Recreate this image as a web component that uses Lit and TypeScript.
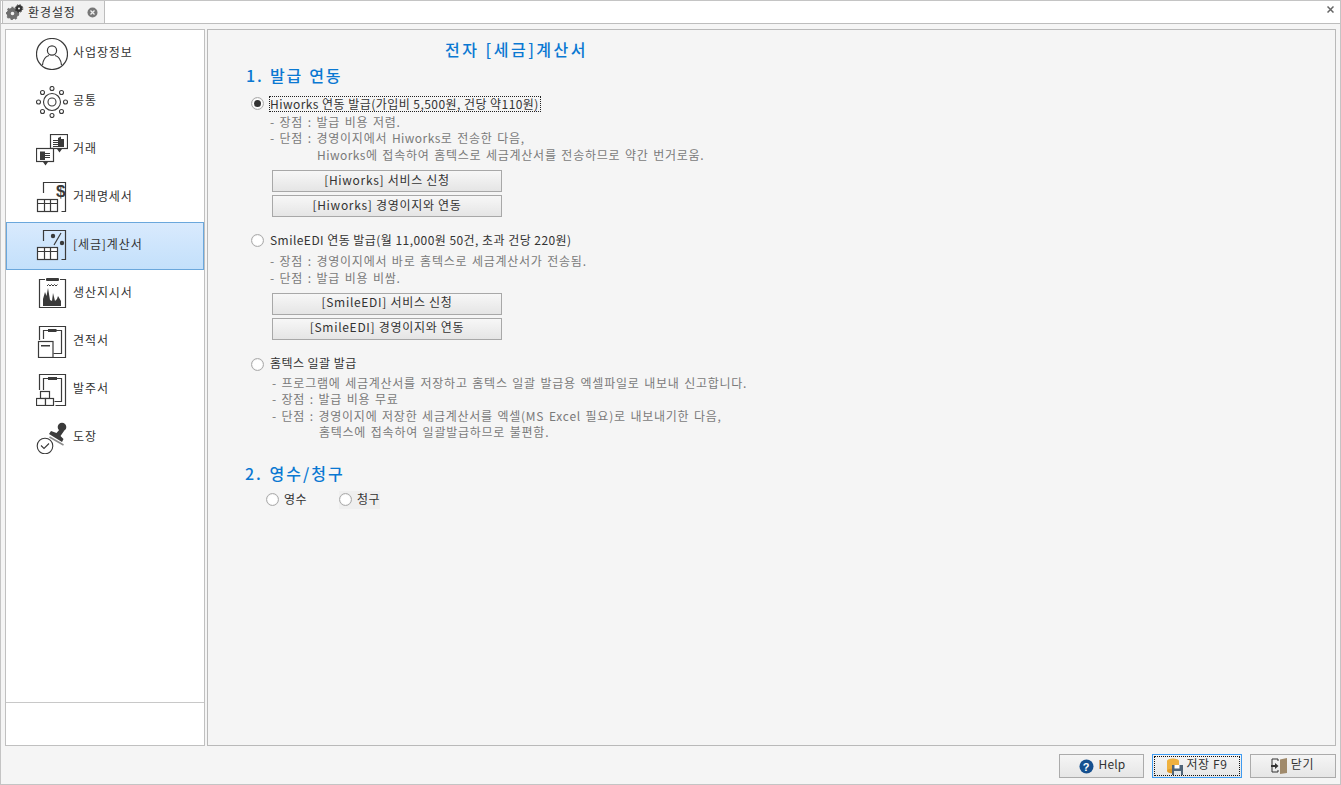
import { LitElement, html, css, svg } from "lit";
import { customElement } from "lit/decorators.js";

const ink = "#3a3a3a";
const table = svg`<g fill="#fff" stroke="${ink}" stroke-width="1.200"><rect x="1.500" y="17.500" width="20" height="12"/><path d="M1.500 21.500h20M8.500 17.500v12M14.500 17.500v12"/></g>`;
const icons: Record<string, any> = {
  user: svg`<circle cx="16" cy="16" r="15.500" fill="none" stroke="${ink}" stroke-width="1.200"/><circle cx="16" cy="12.500" r="4.600" fill="none" stroke="${ink}" stroke-width="1.200"/><path d="M6.500 27c.6-6 4-8.800 6.500-9.500M25.500 27c-.6-6-4-8.800-6.500-9.500" fill="none" stroke="${ink}" stroke-width="1.200"/>`,
  gear: svg`<g fill="none" stroke="${ink}" stroke-width="1.100"><circle cx="16" cy="16" r="8.500"/><circle cx="16" cy="16" r="4"/><circle cx="16" cy="2.500" r="2"/><circle cx="16" cy="29.500" r="2"/><circle cx="2.500" cy="16" r="2"/><circle cx="29.500" cy="16" r="2"/><circle cx="6.500" cy="6.500" r="2"/><circle cx="25.500" cy="6.500" r="2"/><circle cx="6.500" cy="25.500" r="2"/><circle cx="25.500" cy="25.500" r="2"/></g>`,
  trade: svg`<g stroke="${ink}" fill="#fff" stroke-width="1.200"><rect x="14.500" y="0.500" width="17" height="14"/><rect x="0.500" y="14.500" width="17" height="13"/></g><path d="M22 4l3-1.500V5h3v8h-6zM4 17.500h5V26H4z" fill="${ink}"/><path d="M17 6h5v1h-5zM17 8h5v1h-5zM17 10h5v1h-5zM17 12h5v1h-5zM9 19h5v1H9zM9 21h5v1H9zM9 23h5v1H9z" fill="${ink}"/><path d="M21 15h5l-2.500 3.500zM7 28h5l-2.500 3.500z" fill="${ink}"/>`,
  bill: svg`<path d="M7.500 11V.5h22v29h-4" fill="none" stroke="${ink}" stroke-width="1.200"/><text x="20" y="15" font-family="Liberation Sans" font-size="17" font-weight="700" fill="${ink}">$</text>${table}`,
  tax: svg`<path d="M7.500 11V.5h22v29h-4" fill="none" stroke="${ink}" stroke-width="1.200"/><circle cx="17" cy="6" r="2.200" fill="${ink}"/><circle cx="26" cy="13" r="2.200" fill="${ink}"/><path d="M25 3l-7 12" stroke="${ink}" stroke-width="1.200"/>${table}`,
  prod: svg`<path d="M9 1.500H3.500v28h26v-28H24" fill="none" stroke="${ink}" stroke-width="1.200"/><rect x="10" y="0" width="13" height="3" rx="1" fill="${ink}"/><path d="M7 28V21l2-7 1.500 4 1.500-8 2 12 2 1 1-8 2 8 2-2 1-3 3 5V28z" fill="${ink}"/><path d="M11 8l1.500-1.500 1.500 1.500 1.500-1.500 1.500 1.500 1.500-1.500 1.500 1.500 1.500-1.500" fill="none" stroke="${ink}"/>`,
  quote: svg`<path d="M3.500 14V.5h26v31H17" fill="none" stroke="${ink}" stroke-width="1.200"/><path d="M7.500 13V4.500h18v23h-8" fill="none" stroke="${ink}" stroke-width="1.200"/><rect x="12" y="3" width="8.500" height="3" fill="${ink}"/><rect x="2.500" y="15.500" width="14.500" height="16" fill="#fff" stroke="${ink}" stroke-width="1.200"/><rect x="5" y="19" width="9" height="1.500" fill="${ink}"/>`,
  order: svg`<path d="M3.500 16V.5h26v31h-10" fill="none" stroke="${ink}" stroke-width="1.200"/><path d="M7.500 16V4.500h18v23h-7" fill="none" stroke="${ink}" stroke-width="1.200"/><rect x="12" y="3" width="9" height="3" fill="${ink}"/><g fill="#fff" stroke="${ink}" stroke-width="1.200"><rect x="4.500" y="17.500" width="9" height="7"/><rect x="0.500" y="24.500" width="9" height="7"/><rect x="9.500" y="24.500" width="8" height="7"/></g>`,
  stamp: svg`<circle cx="26" cy="5" r="4.300" fill="${ink}"/><path d="M24 7l4 2-3.500 5 3 3-1.500 3-13-8 2-3 5.500 2z" fill="${ink}"/><path d="M13.500 15l14 8" stroke="#8a8a8a" stroke-width="1.600"/><circle cx="9" cy="24" r="7.800" fill="#fff" stroke="${ink}" stroke-width="1.100"/><path d="M5 23.500l3 3 5-5" fill="none" stroke="${ink}" stroke-width="1.100"/>`,
};

const menu: [string, string][] = [
  ["user", "사업장정보"], ["gear", "공통"], ["trade", "거래"], ["bill", "거래명세서"], ["tax", "[세금]계산서"],
  ["prod", "생산지시서"], ["quote", "견적서"], ["order", "발주서"], ["stamp", "도장"],
];

@customElement("app-root")
export class AppRoot extends LitElement {
  static styles = css`
    :host { display: block; width: 1341px; height: 785px; font-family: "Noto Sans CJK KR", "Liberation Sans", sans-serif; font-size: 12px; color: #333; }
    * { box-sizing: border-box; }
    .win { width: 1341px; height: 785px; background: #f5f5f5; border: 1px solid #c4c4c4; display: flex; flex-direction: column; }
    .tabbar { height: 23px; background: #fff; border-bottom: 1px solid #bdbdbd; display: flex; justify-content: space-between; flex: none; }
    .tab { width: 103px; height: 23px; background: #f1f1f1; border-right: 1px solid #bdbdbd; border-bottom: 1px solid #bdbdbd; border-left: 1px solid #bdbdbd; margin-left: 1px; display: flex; align-items: center; padding-left: 3px; font-size: 12px; line-height: 16px; color: #333; }
    .tab .t { margin-left: 4px; width: 48px; letter-spacing: 0.9px; white-space: nowrap; }
    .tab .c { margin-left: 11px; }
    .x { margin: 5px 6px 0 0; }
    .body { flex: 1; display: flex; padding: 5px 4px 0 4px; gap: 2px; min-height: 0; }
    .side { width: 200px; height: 717px; background: #fff; border: 1px solid #c0c0c0; display: flex; flex-direction: column; flex: none; }
    .items { height: 673px; border-bottom: 1px solid #c8c8c8; }
    .item { height: 48px; display: flex; align-items: center; padding-left: 30px; letter-spacing: 0.9px; line-height: 16px; color: #333; }
    .item span { padding-bottom: 4px; }
    .item.sel { background: linear-gradient(#d9eafd, #c3e0fb); border: 1px solid #6aa7dc; padding-left: 29px; }
    .item svg { flex: none; margin-right: 5px; }
    .main { width: 1129px; height: 717px; border: 1px solid #b9b9b9; background: #f5f5f5; padding-left: 38px; flex: none; }
    .title { margin: 10px 0 0 199px; height: 18px; line-height: 18px; font-size: 16px; font-weight: 500; color: #0a78d2; letter-spacing: 2.500px; white-space: nowrap; }
    .h { height: 18px; line-height: 18px; font-size: 16px; font-weight: 500; color: #0a78d2; letter-spacing: 1.800px; word-spacing: 1px; white-space: nowrap; }
    .h1 { margin-top: 8px; }
    .h2 { margin: 23px 0 0 -1px; letter-spacing: 2px; }
    .radio { display: flex; align-items: center; height: 17px; line-height: 16px; letter-spacing: 0.45px; white-space: nowrap; color: #333; }
    .dot { width: 13px; height: 13px; border-radius: 50%; background: #fff; border: 1px solid #aaa; flex: none; margin-right: 6px; display: flex; align-items: center; justify-content: center; box-shadow: inset 0 0 1px #bbb; }
    .dot i { width: 7px; height: 7px; border-radius: 50%; background: #333; }
    .radio .lab { padding-bottom: 2px; }
    .r0 { margin: 11px 0 0 5px; }
    .r1 { margin: 15px 0 0 5px; }
    .r2 { margin: 16px 0 0 5px; }
    .focus { outline: 1px dotted #222; padding: 0 1px 0 0; line-height: 14px; }
    .desc { margin: 2px 0 0 24px; color: #7a7a7a; line-height: 16.4px; letter-spacing: 0.75px; word-spacing: 1.200px; white-space: nowrap; }
    .desc div { height: 16.4px; }
    .d2 { margin-top: 4px; }
    .desc .l { letter-spacing: 0.45px; }
    .ind { padding-left: 47px; }
    .d3 { margin: 2px 0 0 26px; }
    .btns { margin: 7px 0 0 26px; display: flex; flex-direction: column; gap: 3px; }
    .btn { width: 230px; height: 22px; border: 1px solid #a8a8a8; background: linear-gradient(#f7f7f7, #e5e5e5); display: flex; align-items: center; justify-content: center; color: #333; letter-spacing: 0.7px; line-height: 14px; white-space: nowrap; padding-bottom: 3px; }
    .rr { display: flex; margin: 9px 0 0 20px; align-items: center; }
    .rr .radio { height: 18px; }
    .rr .dot { margin-right: 5px; }
    .rr .a { width: 73px; }
    .rr .b { background: #efefef; }
    .foot { height: 38px; display: flex; justify-content: flex-end; align-items: flex-start; padding: 8px 4px 0 0; flex: none; }
    .fb { height: 24px; border: 1px solid #ababab; background: linear-gradient(#f5f5f5, #e6e6e6); display: flex; align-items: center; justify-content: center; letter-spacing: 0.6px; line-height: 14px; color: #333; white-space: nowrap; gap: 4px; }
    .fb span { padding-bottom: 4px; }
    .fb.help { width: 85px; padding-left: 2px; }
    .fb.help span { letter-spacing: 0.2px; }
    .fb.save { width: 90px; margin-left: 8px; border: 1px solid #3f9bf0; }
    .fb.close { width: 86px; margin-left: 8px; gap: 3px; padding-right: 2px; }
    .inner { width: 86px; height: 20px; border: 1px dotted #111; display: flex; align-items: center; justify-content: center; gap: 2px; }
  `;

  render() {
    return html`<div class="win">
      <div class="tabbar">
        <div class="tab">
          <svg width="18" height="16" viewBox="0 0 18 16"><circle cx="6.500" cy="9.500" r="3.800" fill="none" stroke="#6f6f6f" stroke-width="4"/><circle cx="6.500" cy="9.500" r="6" fill="none" stroke="#6f6f6f" stroke-width="1.500" stroke-dasharray="2.200 2.200"/><circle cx="13" cy="4.500" r="2.200" fill="none" stroke="#333" stroke-width="2.400"/><circle cx="13" cy="4.500" r="3.800" fill="none" stroke="#333" stroke-width="1" stroke-dasharray="1.500 1.500"/></svg>
          <span class="t">환경설정</span>
          <svg class="c" width="11" height="11" viewBox="0 0 11 11"><circle cx="5.500" cy="5.500" r="5" fill="#777"/><path d="M3.500 3.500l4 4M7.500 3.500l-4 4" stroke="#eee" stroke-width="1.300"/></svg>
        </div>
        <svg class="x" width="7" height="7" viewBox="0 0 7 7"><path d="M.5.5l6 6M6.500.5l-6 6" stroke="#666" stroke-width="1.500"/></svg>
      </div>
      <div class="body">
        <div class="side">
          <div class="items">
            ${menu.map(([k, label], i) => html`<div class="item ${i === 4 ? "sel" : ""}"><svg width="32" height="32" viewBox="0 0 32 32">${icons[k]}</svg><span>${label}</span></div>`)}
          </div>
        </div>
        <div class="main">
          <div class="title">전자 [세금]계산서</div>
          <div class="h h1">1. 발급 연동</div>
          <div class="radio r0"><span class="dot"><i></i></span><span class="focus">Hiworks 연동 발급(가입비 5,500원, 건당 약110원)</span></div>
          <div class="desc">
            <div>- 장점 : 발급 비용 저렴.</div>
            <div>- 단점 : 경영이지에서 <span class="l">Hiworks</span>로 전송한 다음,</div>
            <div class="ind"><span class="l">Hiworks</span>에 접속하여 홈텍스로 세금계산서를 전송하므로 약간 번거로움.</div>
          </div>
          <div class="btns"><div class="btn">[Hiworks] 서비스 신청</div><div class="btn">[Hiworks] 경영이지와 연동</div></div>
          <div class="radio r1"><span class="dot"></span><span class="lab">SmileEDI 연동 발급(월 11,000원 50건, 초과 건당 220원)</span></div>
          <div class="desc d2">
            <div>- 장점 : 경영이지에서 바로 홈텍스로 세금계산서가 전송됨.</div>
            <div>- 단점 : 발급 비용 비쌈.</div>
          </div>
          <div class="btns"><div class="btn">[SmileEDI] 서비스 신청</div><div class="btn">[SmileEDI] 경영이지와 연동</div></div>
          <div class="radio r2"><span class="dot"></span><span class="lab">홈텍스 일괄 발급</span></div>
          <div class="desc d3">
            <div>- 프로그램에 세금계산서를 저장하고 홈텍스 일괄 발급용 엑셀파일로 내보내 신고합니다.</div>
            <div>- 장점 : 발급 비용 무료</div>
            <div>- 단점 : 경영이지에 저장한 세금계산서를 엑셀(MS Excel 필요)로 내보내기한 다음,</div>
            <div class="ind">홈텍스에 접속하여 일괄발급하므로 불편함.</div>
          </div>
          <div class="h h2">2. 영수/청구</div>
          <div class="rr">
            <div class="radio a"><span class="dot"></span><span class="lab">영수</span></div>
            <div class="radio b"><span class="dot"></span><span class="lab">청구</span></div>
          </div>
        </div>
      </div>
      <div class="foot">
        <div class="fb help"><svg width="15" height="15" viewBox="0 0 15 15"><circle cx="7.500" cy="7.500" r="7" fill="#16508f"/><text x="7.500" y="11.500" text-anchor="middle" font-family="Liberation Sans" font-weight="700" font-size="11" fill="#fff">?</text></svg><span>Help</span></div>
        <div class="fb save"><div class="inner"><svg width="18" height="17" viewBox="0 0 18 17"><ellipse cx="7" cy="3" rx="6" ry="2.500" fill="#efb13f"/><rect x="1" y="3" width="12" height="10" fill="#efb13f"/><ellipse cx="7" cy="13" rx="6" ry="2.500" fill="#e09a2a"/><rect x="6" y="7" width="11" height="10" fill="#4f6478"/><rect x="8.500" y="7" width="5" height="3.500" fill="#fff"/><rect x="8" y="13" width="7" height="4" fill="#dfe4e8"/></svg><span>저장 F9</span></div></div>
        <div class="fb close"><svg width="18" height="16" viewBox="0 0 18 16"><path d="M8 3V1H2v13h6v-2" fill="none" stroke="#333"/><path d="M10 1.500L17 0v15l-7 1z" fill="#a08a6b"/><path d="M1 7h4V5l3.500 3L5 11V9H1z" fill="#333"/></svg><span>닫기</span></div>
      </div>
    </div>`;
  }
}
